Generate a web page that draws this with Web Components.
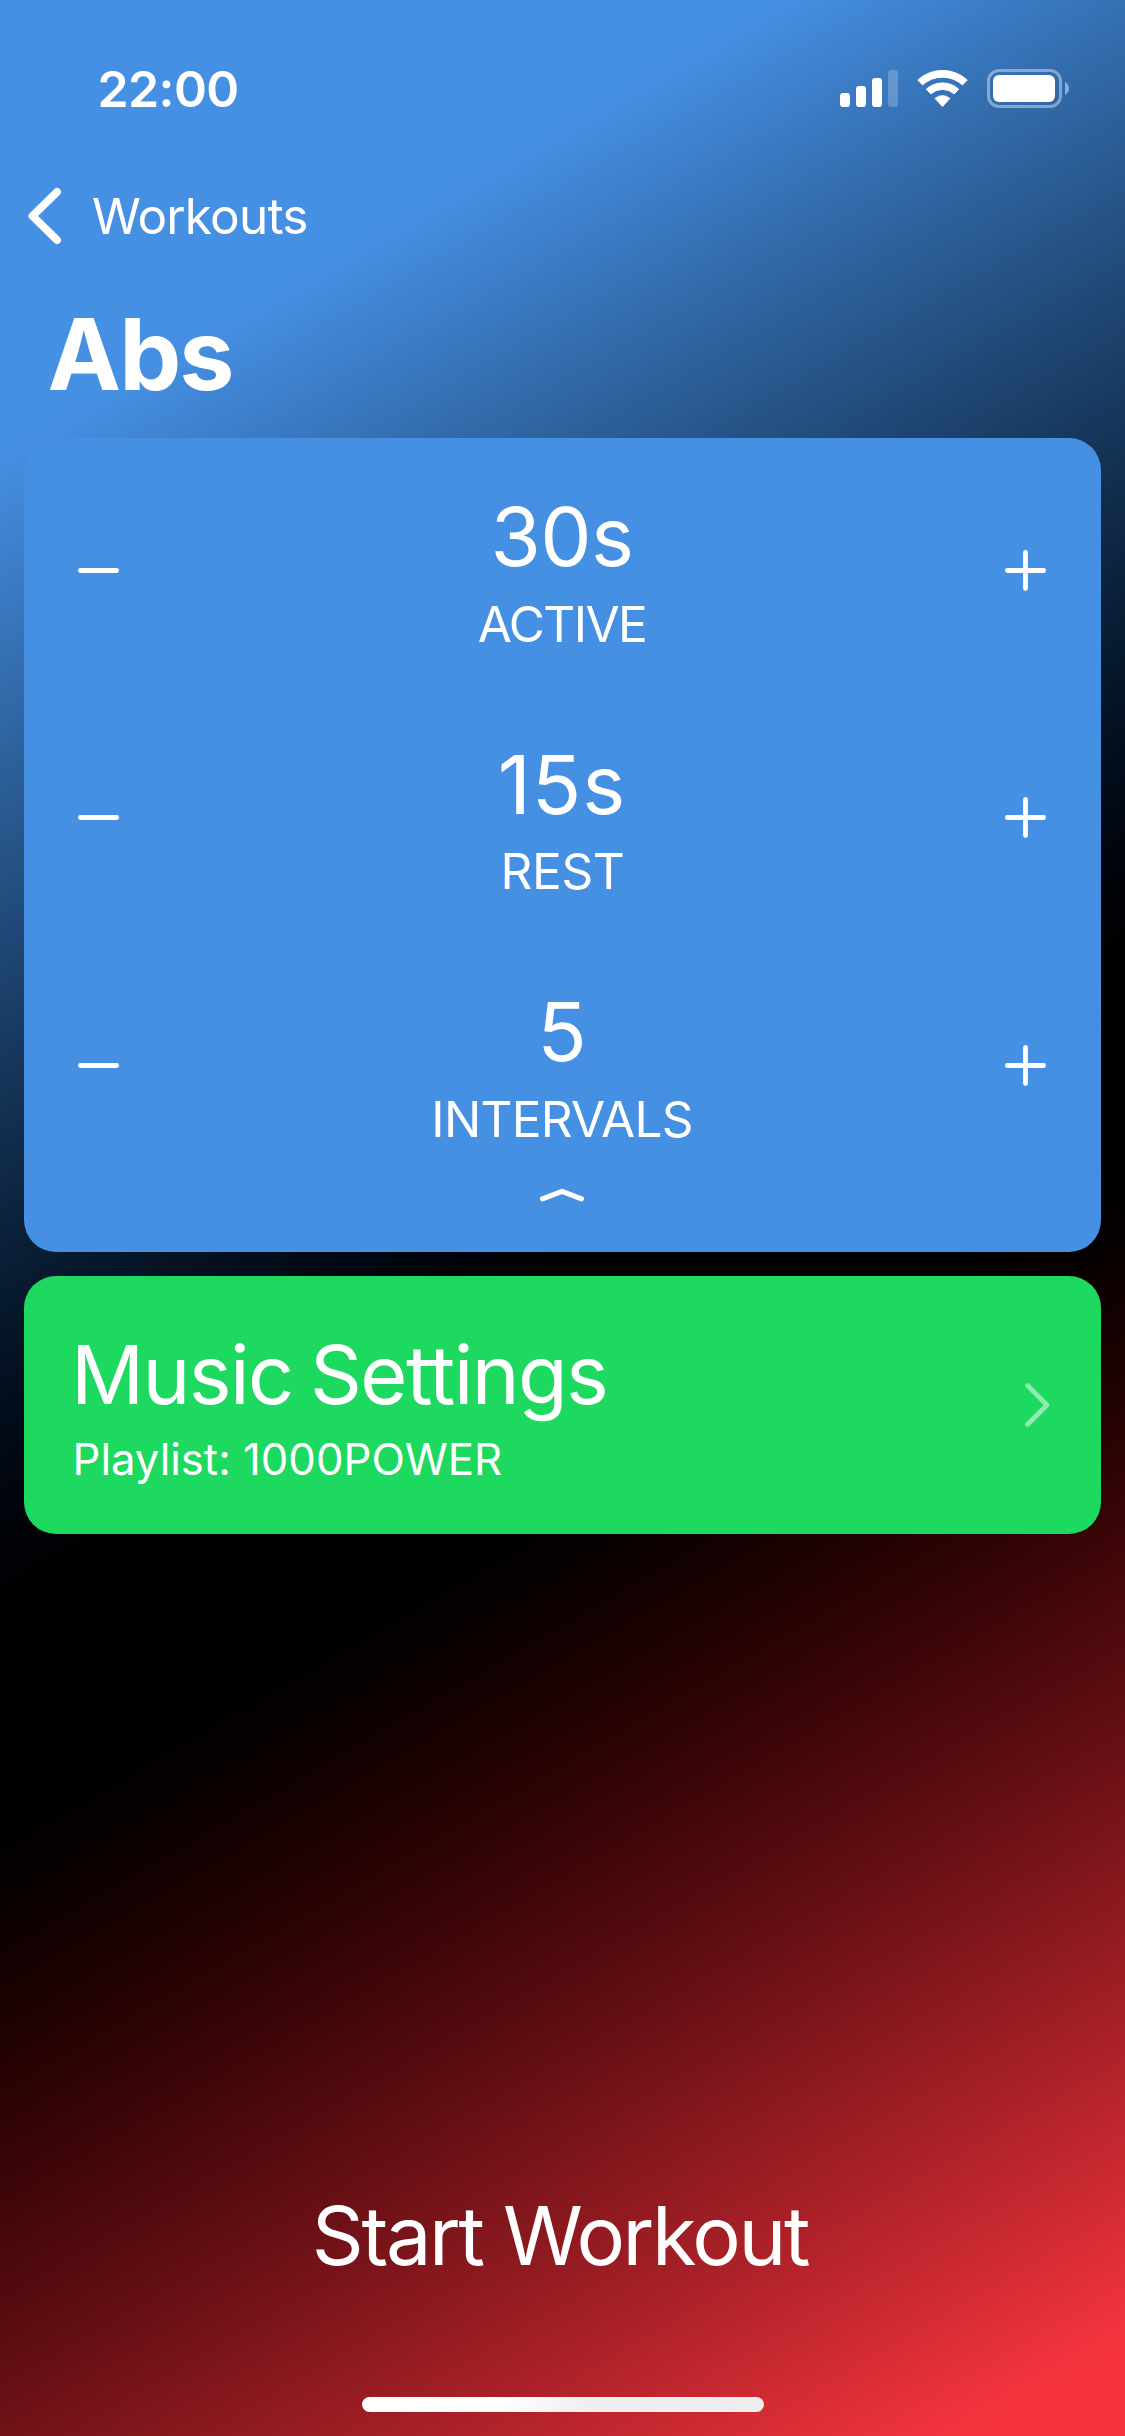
<!DOCTYPE html>
<html lang="en">
<head>
<meta charset="utf-8">
<title>Abs</title>
<style>
html, body { margin: 0; height: 100%; background: #000; }
</style>
</head>
<body>
<workout-screen>
  <status-bar slot="status" time="22:00"></status-bar>
  <nav-header slot="header" back="Workouts" heading="Abs"></nav-header>
  <interval-card>
    <value-stepper label="ACTIVE" style="--vs:-.6px;--ls:-1.55px">30s</value-stepper>
    <value-stepper label="REST" style="--vs:.9px;--ls:-.37px;--nudge:1px;--drop:-1px">15s</value-stepper>
    <value-stepper label="INTERVALS" style="--ls:-.74px">5</value-stepper>
  </interval-card>
  <music-card>Music Settings<span slot="detail">Playlist: 1000POWER</span></music-card>
  <start-button slot="footer">Start Workout</start-button>
  <home-indicator slot="footer"></home-indicator>
</workout-screen>
<script>
function define(name, render) {
  customElements.define(name, class extends HTMLElement {
    connectedCallback() {
      if (this.shadowRoot) return;
      const t = document.createElement('template');
      t.innerHTML = render(this);
      this.attachShadow({ mode: 'open' }).append(t.content.cloneNode(true));
    }
  });
}

define('workout-screen', () => `
<style>
:host { display: flex; flex-direction: column; box-sizing: border-box; width: 1125px; height: 2436px; overflow: hidden;
  color: #fff; font-family: Inter, "Liberation Sans", sans-serif;
  background: linear-gradient(149.8deg in oklab, #4690e4 389px, #000 1488px, #f6343e 2588px); }
main { flex: 1; display: flex; flex-direction: column; gap: 24px; padding: 24px 24px 0; }
</style>
<slot name="status"></slot>
<slot name="header"></slot>
<main><slot></slot></main>
<slot name="footer"></slot>`);

define('status-bar', el => `
<style>
:host { display: flex; align-items: flex-start; justify-content: space-between; box-sizing: border-box; height: 150px; padding: 59px 56px 0 97.500px; }
time { font: 600 50px/60px Inter, sans-serif; letter-spacing: -.6px; }
.icons { display: flex; gap: 19px; padding-top: 9px; }
svg { display: block; fill: #fff; }
</style>
<time>${el.getAttribute('time')}</time>
<div class="icons">
  <svg width="58" height="40" viewBox="0 0 58 40"><rect x="0" y="25" width="10" height="14" rx="3"/><rect x="16" y="18" width="10" height="21" rx="3"/><rect x="32" y="10" width="10" height="29" rx="3"/><rect x="48" y="2" width="10" height="37" rx="3" opacity=".22"/></svg>
  <svg width="51" height="40" viewBox="-25.5 -39 51 40" stroke="#fff" stroke-width="1" stroke-linejoin="round"><path d="M-24.7-27A36.6 36.6 0 0 1 24.7-27L20-22.1A29.8 29.8 0 0 0-20-22.1Z"/><path d="M-16.2-17.8A24 24 0 0 1 16.2-17.8L11.7-13.1A17.5 17.5 0 0 0-11.7-13.1Z"/><path d="M-7.4-8.6A11.4 11.4 0 0 1 7.4-8.6L0-.6Z"/></svg>
  <svg width="82" height="40" viewBox="0 0 82 40"><rect x="1.5" y="2.5" width="72" height="36" rx="10.5" fill="none" stroke="#fff" stroke-width="3" opacity=".4"/><rect x="6" y="7" width="62" height="27" rx="6"/><path d="M78 14C80.500 15.500 82 17.500 82 20.500S80.500 25.500 78 27Z" opacity=".45"/></svg>
</div>`);

define('nav-header', el => `
<style>
:host { display: block; height: 264px; }
.back { display: flex; align-items: center; gap: 30px; height: 60px; padding: 36px 0 0 28px; font: 400 49.500px/60px Inter, sans-serif; letter-spacing: -.83px; }
svg { display: block; fill: none; stroke: #fff; stroke-width: 8; stroke-linecap: round; stroke-linejoin: round; }
h1 { margin: 49px 0 0 47.500px; font: 700 98.500px/120px Inter, sans-serif; letter-spacing: -1.900px; }
</style>
<div class="back"><svg width="34" height="58" viewBox="0 0 34 58"><path d="M29 5L4.500 29L29 53"/></svg><span>${el.getAttribute('back')}</span></div>
<h1>${el.getAttribute('heading')}</h1>`);

define('interval-card', () => `
<style>
:host { display: flex; flex-direction: column; box-sizing: border-box; height: 814px; padding-top: 8.500px; border-radius: 32px; background: #4690e4; }
svg { display: block; align-self: center; margin: -1px 1px 0 0; fill: none; stroke: #fff; stroke-width: 5; stroke-linecap: round; stroke-linejoin: round; }
</style>
<slot></slot>
<svg width="44" height="14" viewBox="0 0 44 14"><path d="M2.500 10.800L22 3.300L41.500 10.800"/></svg>`);

define('value-stepper', el => `
<style>
:host { display: flex; align-items: center; justify-content: space-between; height: 247.500px; padding: 0 55px 0 54px; }
.text { display: flex; flex-direction: column; align-items: center; gap: 7px; padding-top: 1px; text-align: center; }
.value { font-size: 81.500px; line-height: 100px; letter-spacing: var(--vs, 0); }
.label { margin-top: var(--drop, 0); padding-left: var(--nudge, 0); font-size: 49.500px; line-height: 60px; letter-spacing: var(--ls, 0); }
svg { display: block; fill: none; stroke: #fff; stroke-width: 4.800; stroke-linecap: round; }
</style>
<svg width="41" height="41" viewBox="0 0 41 41"><path d="M2.400 20.500H38.600"/></svg>
<div class="text"><div class="value"><slot></slot></div><div class="label">${el.getAttribute('label')}</div></div>
<svg width="41" height="41" viewBox="0 0 41 41"><path d="M2.400 20.500H38.600M20.500 2.400V38.600"/></svg>`);

define('music-card', () => `
<style>
:host { display: flex; align-items: center; justify-content: space-between; box-sizing: border-box; height: 258px; padding: 1px 51px 0 48px; border-radius: 32px; background: #1ed960; }
.text { display: flex; flex-direction: column; gap: 8px; }
.title { margin-left: -1px; font-size: 81px; line-height: 100px; letter-spacing: -1.600px; word-spacing: -4px; }
.detail { padding-left: .5px; font-size: 43.700px; line-height: 54px; }
svg { display: block; margin-top: -1px; fill: none; stroke: #fff; stroke-width: 4.600; stroke-linecap: round; stroke-linejoin: round; opacity: .5; }
</style>
<div class="text"><div class="title"><slot></slot></div><div class="detail"><slot name="detail"></slot></div></div>
<svg width="25" height="44" viewBox="0 0 25 44"><path d="M2.500 2.500L22 22L2.500 41.500"/></svg>`);

define('start-button', () => `
<style>
:host { display: block; text-align: center; font-size: 81px; line-height: 100px; letter-spacing: -2.350px; padding: 0 5px 111.500px 0; }
</style>
<slot></slot>`);

define('home-indicator', () => `
<style>
:host { display: block; width: 402px; height: 15px; margin: 0 auto 24px; border-radius: 8px;
  background: linear-gradient(90deg, #fff 35%, #efefef 56%, #ededed); }
</style>`);
</script>
</body>
</html>
